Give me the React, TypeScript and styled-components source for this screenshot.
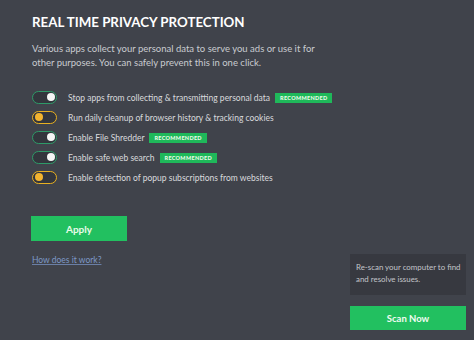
import { createGlobalStyle, styled } from "styled-components";

const GlobalStyle = createGlobalStyle`
  html, body {
    margin: 0;
    padding: 0;
    background: #40434b;
  }
  body {
    font-family: Lato, "Open Sans", sans-serif;
  }
`;

const Page = styled.div`
  width: 474px;
  height: 340px;
  display: flex;
  background: #40434b;
  overflow: hidden;
`;

const Main = styled.div`
  flex: 1;
  display: flex;
  flex-direction: column;
  align-items: flex-start;
  padding: 11px 0 0 32px;
`;

const Title = styled.h1`
  margin: 0;
  font-size: 13.3px;
  font-weight: 700;
  color: #ffffff;
  line-height: 22px;
`;

const Description = styled.p`
  margin: 9px 0 0;
  width: 300px;
  font-size: 9.5px;
  line-height: 13.5px;
  color: #c9cbd0;
`;

const OptionList = styled.div`
  display: flex;
  flex-direction: column;
  gap: 7px;
  margin-top: 22px;
`;

const Option = styled.div`
  display: flex;
  align-items: center;
  height: 13px;
`;

const Toggle = styled.span<{ $on?: boolean }>`
  position: relative;
  box-sizing: border-box;
  width: 25px;
  height: 13px;
  border-radius: 7px;
  border: 1.5px solid ${(p) => (p.$on ? "#2e9a68" : "#e8b021")};
  background: #33363d;
  margin-right: 11px;
  flex-shrink: 0;

  &::after {
    content: "";
    position: absolute;
    top: 1px;
    ${(p) => (p.$on ? "right: 1.5px;" : "left: 1.5px;")}
    width: 8px;
    height: 8px;
    border-radius: 50%;
    background: ${(p) => (p.$on ? "#f4f6f5" : "#f2b430")};
  }
`;

const Label = styled.span`
  font-size: 8.5px;
  color: #d9dadd;
  white-space: nowrap;
`;

const Badge = styled.span`
  margin-left: 5px;
  padding: 0 5px;
  height: 10px;
  line-height: 10px;
  background: #1fb85a;
  color: #e9fbe9;
  font-size: 5.5px;
  font-weight: 900;
  letter-spacing: 0.3px;
`;

const ApplyButton = styled.button`
  margin-top: 32px;
  margin-left: -1px;
  width: 96px;
  height: 25px;
  border: none;
  background: #22c060;
  color: #eafbe9;
  font-family: inherit;
  font-size: 10px;
  font-weight: 700;
`;

const HelpLink = styled.a`
  margin-top: 14px;
  font-size: 8.5px;
  color: #7d98c6;
  text-decoration: underline;
  text-decoration-color: #6a7fa6;
`;

const Side = styled.div`
  display: flex;
  flex-direction: column;
  justify-content: flex-end;
  padding: 0 8px 10px 0;
  width: 116px;
`;

const InfoBox = styled.div`
  background: #373940;
  padding: 7px 2px 10px 6px;
  font-size: 7.9px;
  line-height: 12px;
  color: #c3c5ca;
`;

const ScanButton = styled.button`
  margin-top: 11px;
  height: 24px;
  border: none;
  background: #22c060;
  color: #f0fcf2;
  font-family: inherit;
  font-size: 9.5px;
  font-weight: 700;
`;

const options = [
  { label: "Stop apps from collecting & transmitting personal data", on: true, recommended: true },
  { label: "Run daily cleanup of browser history & tracking cookies", on: false },
  { label: "Enable File Shredder", on: true, recommended: true },
  { label: "Enable safe web search", on: true, recommended: true },
  { label: "Enable detection of popup subscriptions from websites", on: false },
];

export default function App() {
  return (
    <Page>
      <GlobalStyle />
      <Main>
        <Title>REAL TIME PRIVACY PROTECTION</Title>
        <Description>
          Various apps collect your personal data to serve you ads or use it for other
          purposes. You can safely prevent this in one click.
        </Description>
        <OptionList>
          {options.map((o) => (
            <Option key={o.label}>
              <Toggle $on={o.on} />
              <Label>{o.label}</Label>
              {o.recommended && <Badge>RECOMMENDED</Badge>}
            </Option>
          ))}
        </OptionList>
        <ApplyButton>Apply</ApplyButton>
        <HelpLink href="#">How does it work?</HelpLink>
      </Main>
      <Side>
        <InfoBox>Re-scan your computer to find and resolve issues.</InfoBox>
        <ScanButton>Scan Now</ScanButton>
      </Side>
    </Page>
  );
}
